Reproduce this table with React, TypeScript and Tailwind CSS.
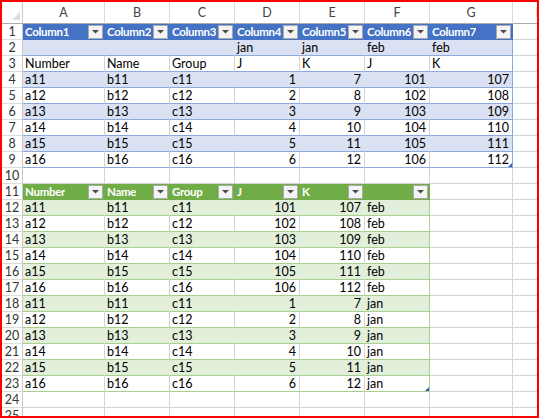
import React from "react";

const COLW = [
  "w-[82px]",
  "w-[65px]",
  "w-[65px]",
  "w-[65px]",
  "w-[65px]",
  "w-[65px]",
  "w-[83px]",
  "w-[56px]",
];
const LETTERS = ["A", "B", "C", "D", "E", "F", "G", "H"];

type CellSpec = {
  text?: string | number;
  head?: boolean;
  bg: string;
  rb: string;
  bb: string;
  fg?: string;
  handle?: string;
};

const PLAIN: CellSpec = {
  bg: "bg-white",
  rb: "border-r-[#d4d4d4]",
  bb: "border-b-[#d4d4d4]",
};

function Arrow() {
  return (
    <div className="ml-auto mr-[1px] mt-[1px] self-start w-[15px] h-[14px] shrink-0 bg-[#f4f4f4] border border-[#a9a9a9] flex items-center justify-center">
      <svg width="7" height="4" viewBox="0 0 7 4">
        <polygon points="0,0 7,0 3.5,3.5" fill="#4a4a4a" />
      </svg>
    </div>
  );
}

function Cell({ spec, w }: { spec: CellSpec; w: string }) {
  const isNum = typeof spec.text === "number";
  return (
    <div
      className={`relative shrink-0 h-full border-r border-b flex items-center overflow-hidden ${w} ${spec.bg} ${spec.rb} ${spec.bb} ${spec.fg ?? "text-black"} ${isNum ? "justify-end pr-[3px]" : "pl-[2px]"}`}
    >
      {spec.head ? (
        <>
          <span className="whitespace-nowrap overflow-hidden min-w-0 font-bold text-[11.5px] tracking-[-0.3px]">
            {spec.text}
          </span>
          <Arrow />
        </>
      ) : (
        <span className="whitespace-nowrap">{spec.text}</span>
      )}
      {spec.handle ? (
        <svg
          className="absolute right-0 bottom-0"
          width="4"
          height="4"
          viewBox="0 0 4 4"
        >
          <polygon points="4,0 4,4 0,4" fill={spec.handle} />
        </svg>
      ) : null}
    </div>
  );
}

function buildRow(r: number): CellSpec[] {
  const cells: CellSpec[] = [];
  for (let c = 0; c < 8; c++) cells.push({ ...PLAIN });

  if (r >= 1 && r <= 9) {
    for (let c = 0; c < 7; c++) {
      const last = c === 6;
      if (r === 1) {
        cells[c] = {
          text: `Column${c + 1}`,
          head: true,
          bg: "bg-[#4472c4]",
          rb: "border-r-[#4472c4]",
          bb: "border-b-[#4472c4]",
          fg: "text-white",
        };
        continue;
      }
      const band = r % 2 === 0;
      let text: string | number = "";
      if (r === 2) text = ["", "", "", "jan", "jan", "feb", "feb"][c];
      else if (r === 3) text = ["Number", "Name", "Group", "J", "K", "J", "K"][c];
      else {
        const i = r - 4;
        text = [
          `a1${i + 1}`,
          `b1${i + 1}`,
          `c1${i + 1}`,
          i + 1,
          i + 7,
          101 + i,
          107 + i,
        ][c];
      }
      cells[c] = {
        text,
        bg: band ? "bg-[#d9e1f2]" : "bg-white",
        rb: last
          ? "border-r-[#8ea9db]"
          : band
          ? "border-r-[#d9e1f2]"
          : "border-r-[#d4d4d4]",
        bb: "border-b-[#8ea9db]",
        handle: r === 9 && last ? "#3a5bb8" : undefined,
      };
    }
  }

  if (r >= 11 && r <= 23) {
    for (let c = 0; c < 6; c++) {
      const last = c === 5;
      if (r === 11) {
        cells[c] = {
          text: ["Number", "Name", "Group", "J", "K", ""][c],
          head: true,
          bg: "bg-[#70ad47]",
          rb: "border-r-[#70ad47]",
          bb: "border-b-[#70ad47]",
          fg: "text-white",
        };
        continue;
      }
      const band = r % 2 === 0;
      let text: string | number;
      if (r <= 17) {
        const i = r - 12;
        text = [`a1${i + 1}`, `b1${i + 1}`, `c1${i + 1}`, 101 + i, 107 + i, "feb"][c];
      } else {
        const i = r - 18;
        text = [`a1${i + 1}`, `b1${i + 1}`, `c1${i + 1}`, 1 + i, 7 + i, "jan"][c];
      }
      cells[c] = {
        text,
        bg: band ? "bg-[#e2efda]" : "bg-white",
        rb: last
          ? "border-r-[#a9d08e]"
          : band
          ? "border-r-[#e2efda]"
          : "border-r-[#d4d4d4]",
        bb: "border-b-[#a9d08e]",
        handle: r === 23 && last ? "#3a5bb8" : undefined,
      };
    }
  }
  return cells;
}

export default function App() {
  const rows = Array.from({ length: 25 }, (_, i) => i + 1);
  return (
    <div
      className="w-[539px] h-[418px] border-2 border-[#ff0000] bg-white overflow-hidden text-[12.5px] leading-[16px]"
      style={{ fontFamily: 'Lato, "Liberation Sans", Arial, sans-serif' }}
    >
      <div className="flex h-[22px]">
        <div className="w-[21px] shrink-0 h-full border-r border-b border-r-[#c8c8c8] border-b-[#ababab] bg-white flex items-end justify-end pr-[2px] pb-[3px]">
          <svg width="8" height="8" viewBox="0 0 8 8">
            <polygon points="8,0 8,8 0,8" fill="#dcdcdc" />
          </svg>
        </div>
        {LETTERS.map((l, i) => (
          <div
            key={l}
            className={`${COLW[i]} shrink-0 h-full border-r border-b border-r-[#dadada] border-b-[#ababab] bg-white flex items-center justify-center text-[#444]`}
          >
            {l}
          </div>
        ))}
      </div>
      {rows.map((r) => {
        const cells = buildRow(r);
        return (
          <div key={r} className="flex h-[16px]">
            <div className="w-[21px] shrink-0 h-full border-r border-b border-r-[#c8c8c8] border-b-[#dcdcdc] bg-white flex items-center justify-center text-[#333]">
              {r}
            </div>
            {cells.map((s, c) => (
              <Cell key={c} spec={s} w={COLW[c]} />
            ))}
          </div>
        );
      })}
    </div>
  );
}
